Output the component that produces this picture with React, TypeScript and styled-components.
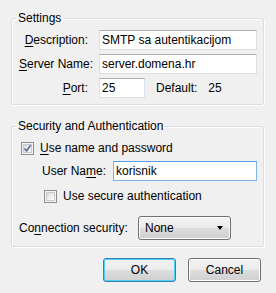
import styled, { createGlobalStyle } from 'styled-components';
import { FC, ReactNode } from 'react';

const GlobalStyle = createGlobalStyle`
    html, body {
        margin:0;
        padding:0;
        background:#f0f0f0;
    }
    body {
        font-family: "Liberation Sans", Arial, sans-serif;
        font-size:12px;
        color:#000;
    }
`;

const Dialog = styled.div`
    width:276px;
    height:293px;
    box-sizing:border-box;
    padding:10px 12px 0 11px;
    display:flex;
    flex-direction:column;
`;

const Group = styled.fieldset<{ $gap?: number }>`
    margin:0 0 ${p => p.$gap ?? 0}px 0;
    padding:4px 6px 6px 7px;
    border:1px solid #d5dfe5;
    border-radius:3px;
    box-shadow: inset 1px 1px 0 #fff, 1px 1px 0 #fff;
    min-width:0;
`;

const Legend = styled.legend`
    padding:0 2px;
    margin-left:-3px;
    line-height:16px;
`;

const Row = styled.div<{ $top?: number; $indent?: number; $height?: number; $gap?: number }>`
    display:flex;
    align-items:center;
    gap:${p => p.$gap ?? 11}px;
    height:${p => p.$height ?? 20}px;
    margin-top:${p => p.$top ?? 0}px;
    margin-left:${p => p.$indent ?? 0}px;
`;

const Label = styled.span<{ $width: number; $align?: string }>`
    width:${p => p.$width}px;
    flex:none;
    text-align:${p => p.$align ?? 'left'};
    white-space:nowrap;
`;

const Key = styled.u`
    text-decoration-thickness:1px;
    text-underline-offset:2px;
`;

const Input = styled.input<{ $width?: number; $focused?: boolean }>`
    box-sizing:border-box;
    height:20px;
    margin:0;
    padding:0 2px;
    font:inherit;
    color:#000;
    background:#fff;
    outline:none;
    border:1px solid ${p => p.$focused ? '#7eb4ea' : '#dbdfe6'};
    border-top-color:${p => p.$focused ? '#569de5' : '#abadb3'};
    ${p => p.$width ? `width:${p.$width}px; flex:none;` : 'flex:1; min-width:0;'}
`;

const Plain = styled.span`
    white-space:nowrap;
`;

const CheckRow = styled.label<{ $top?: number; $indent?: number }>`
    display:flex;
    align-items:center;
    gap:6px;
    height:16px;
    margin-top:${p => p.$top ?? 0}px;
    margin-left:${p => p.$indent ?? 0}px;
`;

const Box = styled.span`
    position:relative;
    box-sizing:border-box;
    width:13px;
    height:13px;
    margin-left:2px;
    flex:none;
    border:1px solid #8f8f8f;
    background:#f4f4f4;
    &::before {
        content:'';
        position:absolute;
        inset:1px;
        border:1px solid #c9c9c9;
        background:linear-gradient(135deg, #d8d8d8 0%, #f2f2f2 60%, #fbfbfb 100%);
    }
    svg {
        position:absolute;
        left:1px;
        top:1px;
    }
`;

const Checkbox: FC<{ checked?: boolean; children: ReactNode; top?: number; indent?: number }> = ({ checked, children, top, indent }) => (
    <CheckRow $top={top} $indent={indent}>
        <Box>
            {checked && (
                <svg width="9" height="9" viewBox="0 0 9 9">
                    <path d="M1.5 4.5 L3.6 7 L7.6 1.2" fill="none" stroke="#5a6b9a" strokeWidth="1.6" />
                </svg>
            )}
        </Box>
        <span>{children}</span>
    </CheckRow>
);

const Select = styled.div`
    box-sizing:border-box;
    width:93px;
    height:24px;
    flex:none;
    display:flex;
    align-items:center;
    justify-content:space-between;
    padding:0 6px 0 6px;
    border:1px solid #707070;
    border-radius:3px;
    background:linear-gradient(180deg, #f2f2f2 0%, #ebebeb 50%, #dddddd 51%, #cfcfcf 100%);
    box-shadow: inset 0 0 0 1px #fcfcfc;
`;

const Arrow = styled.span`
    width:0;
    height:0;
    border-left:3.5px solid transparent;
    border-right:3.5px solid transparent;
    border-top:4px solid #000;
    margin-right:1px;
`;

const Buttons = styled.div`
    display:flex;
    justify-content:flex-end;
    gap:12px;
    margin-top:11px;
    padding-right:3px;
`;

const Button = styled.button<{ $default?: boolean }>`
    box-sizing:border-box;
    width:73px;
    height:24px;
    margin:0;
    padding:0;
    font:inherit;
    color:#000;
    border-radius:3px;
    border:1px solid ${p => p.$default ? '#3c7fb1' : '#707070'};
    background:linear-gradient(180deg, #f2f2f2 0%, #ebebeb 50%, #dddddd 51%, #cfcfcf 100%);
    box-shadow: inset 0 0 0 1px ${p => p.$default ? '#48d1f4' : '#fcfcfc'};
`;

const App: FC = () => (
    <>
        <GlobalStyle />
        <Dialog>
            <Group $gap={13}>
                <Legend>Settings</Legend>
                <Row>
                    <Label $width={69} $align="right"><Key>D</Key>escription:</Label>
                    <Input readOnly value="SMTP sa autentikacijom" />
                </Row>
                <Row $top={4}>
                    <Label $width={69} $align="right"><Key>S</Key>erver Name:</Label>
                    <Input readOnly value="server.domena.hr" />
                </Row>
                <Row $top={4}>
                    <Label $width={69} $align="right"><Key>P</Key>ort:</Label>
                    <Input readOnly value="25" $width={46} />
                    <Plain>Default:</Plain>
                    <Plain>25</Plain>
                </Row>
            </Group>
            <Group>
                <Legend>Security and Authentication</Legend>
                <Checkbox checked top={2}><Key>U</Key>se name and password</Checkbox>
                <Row $top={5} $indent={23}>
                    <Label $width={60}>User Na<Key>m</Key>e:</Label>
                    <Input readOnly value="korisnik" $focused />
                </Row>
                <Checkbox top={7} indent={23}>Use secure authentication</Checkbox>
                <Row $top={12} $height={24} $gap={0}>
                    <Label $width={119}>Co<Key>n</Key>nection security:</Label>
                    <Select>
                        <span>None</span>
                        <Arrow />
                    </Select>
                </Row>
            </Group>
            <Buttons>
                <Button $default>OK</Button>
                <Button>Cancel</Button>
            </Buttons>
        </Dialog>
    </>
);

export default App;
